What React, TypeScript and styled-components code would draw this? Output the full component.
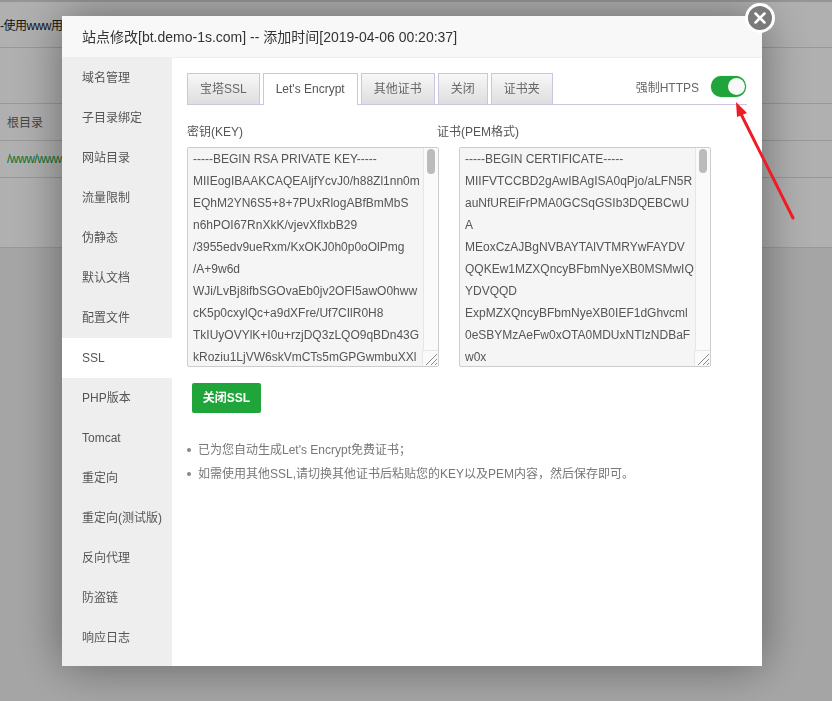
import React from 'react';
import styled, { createGlobalStyle } from 'styled-components';
import { X } from 'lucide-react';

const sideItems = [
  '域名管理',
  '子目录绑定',
  '网站目录',
  '流量限制',
  '伪静态',
  '默认文档',
  '配置文件',
  'SSL',
  'PHP版本',
  'Tomcat',
  '重定向',
  '重定向(测试版)',
  '反向代理',
  '防盗链',
  '响应日志',
];

const tabs = ['宝塔SSL', "Let's Encrypt", '其他证书', '关闭', '证书夹'];

const keyText = `-----BEGIN RSA PRIVATE KEY-----
MIIEogIBAAKCAQEAljfYcvJ0/h88Zl1nn0m
EQhM2YN6S5+8+7PUxRlogABfBmMbS
n6hPOI67RnXkK/vjevXflxbB29
/3955edv9ueRxm/KxOKJ0h0p0oOlPmg
/A+9w6d
WJi/LvBj8ifbSGOvaEb0jv2OFI5awO0hww
cK5p0cxylQc+a9dXFre/Uf7CIlR0H8
TkIUyOVYlK+I0u+rzjDQ3zLQO9qBDn43G
kRoziu1LjVW6skVmCTs5mGPGwmbuXXl`;

const certText = `-----BEGIN CERTIFICATE-----
MIIFVTCCBD2gAwIBAgISA0qPjo/aLFN5R
auNfUREiFrPMA0GCSqGSIb3DQEBCwU
A
MEoxCzAJBgNVBAYTAlVTMRYwFAYDV
QQKEw1MZXQncyBFbmNyeXB0MSMwIQ
YDVQQD
ExpMZXQncyBFbmNyeXB0IEF1dGhvcml
0eSBYMzAeFw0xOTA0MDUxNTIzNDBaF
w0x`;

const CodeField = ({ value, thumb }: { value: string; thumb: number }) => (
  <FieldBox>
    <CodeArea readOnly wrap="off" defaultValue={value} />
    <ScrollTrack>
      <ScrollThumb style={{ height: thumb }} />
    </ScrollTrack>
    <Grip>
      <svg width="15" height="15" viewBox="0 0 15 15">
        <path d="M3 14 L14 3 M8 14 L14 8 M12 14 L14 12" stroke="#8a8a8a" strokeWidth="1" fill="none" />
      </svg>
    </Grip>
  </FieldBox>
);

const App = () => {
  return (
    <>
      <GlobalStyle />
      <Page>
        <TopStrip />
        <NoticeRow>-使用www用</NoticeRow>
        <BlankRow />
        <HeadRow>根目录</HeadRow>
        <PathRow>/www/www</PathRow>
        <TallRow />
      </Page>
      <Shade />
      <Modal>
        <CloseButton>
          <X size={18} strokeWidth={3.4} color="#fff" />
        </CloseButton>
        <Header>站点修改[bt.demo-1s.com] -- 添加时间[2019-04-06 00:20:37]</Header>
        <Body>
          <Sidebar>
            {sideItems.map((item) => (
              <SideItem key={item} $active={item === 'SSL'}>
                {item}
              </SideItem>
            ))}
          </Sidebar>
          <Content>
            <TabBar>
              {tabs.map((tab) => (
                <Tab key={tab} $active={tab === "Let's Encrypt"}>
                  {tab}
                </Tab>
              ))}
              <ForceHttps>
                <ForceLabel>强制HTTPS</ForceLabel>
                <Toggle>
                  <Knob />
                </Toggle>
              </ForceHttps>
            </TabBar>
            <Labels>
              <FieldLabel>密钥(KEY)</FieldLabel>
              <FieldLabel>证书(PEM格式)</FieldLabel>
            </Labels>
            <Fields>
              <CodeField value={keyText} thumb={25} />
              <CodeField value={certText} thumb={24} />
            </Fields>
            <GreenButton>关闭SSL</GreenButton>
            <Notes>
              <Note>已为您自动生成Let's Encrypt免费证书；</Note>
              <Note>如需使用其他SSL,请切换其他证书后粘贴您的KEY以及PEM内容，然后保存即可。</Note>
            </Notes>
          </Content>
        </Body>
      </Modal>
      <Arrow width="70" height="125" viewBox="0 0 70 125">
        <path d="M62 122 L9 16" stroke="#ee1c25" strokeWidth="3" strokeLinecap="round" fill="none" />
        <path d="M5 6 L6 21 L16 17 Z" fill="#ee1c25" />
      </Arrow>
    </>
  );
};

export default App;

const GlobalStyle = createGlobalStyle`
  html, body {
    margin: 0;
    padding: 0;
    width: 832px;
    height: 701px;
    overflow: hidden;
    background: #fff;
    font-family: "Liberation Sans", "Noto Sans CJK SC", sans-serif;
    font-size: 12px;
    color: #555;
  }
`;

const Page = styled.div`
  display: flex;
  flex-direction: column;
  width: 832px;
  height: 701px;
  background: #f0f0f0;
`;

const TopStrip = styled.div`
  height: 2px;
  background: #d8d8d8;
`;

const NoticeRow = styled.div`
  display: flex;
  align-items: center;
  height: 46px;
  box-sizing: border-box;
  padding-bottom: 1px;
  letter-spacing: -0.5px;
  white-space: nowrap;
  color: #222;
  background: #fff;
  border-bottom: 1px solid #ddd;
`;

const BlankRow = styled.div`
  height: 56px;
  box-sizing: border-box;
  background: #fff;
  border-bottom: 1px solid #ddd;
`;

const HeadRow = styled.div`
  display: flex;
  align-items: center;
  height: 37px;
  box-sizing: border-box;
  padding: 0 0 2px 7px;
  color: #666;
  background: #fff;
  border-bottom: 1px solid #ddd;
`;

const PathRow = styled.div`
  display: flex;
  align-items: center;
  height: 37px;
  box-sizing: border-box;
  padding: 0 0 0 7px;
  letter-spacing: -0.5px;
  white-space: nowrap;
  color: #20a53a;
  background: #fff;
  border-bottom: 1px solid #ddd;
`;

const TallRow = styled.div`
  height: 70px;
  box-sizing: border-box;
  background: #fff;
  border-bottom: 1px solid #ddd;
`;

const Shade = styled.div`
  position: fixed;
  inset: 0;
  background: rgba(0, 0, 0, 0.31);
`;

const Modal = styled.div`
  position: fixed;
  left: 62px;
  top: 16px;
  width: 700px;
  height: 650px;
  display: flex;
  flex-direction: column;
  background: #fff;
  box-shadow: 0 0 45px rgba(0, 0, 0, 0.42);
`;

const CloseButton = styled.div`
  position: absolute;
  top: -13px;
  right: -13px;
  width: 24px;
  height: 24px;
  display: flex;
  align-items: center;
  justify-content: center;
  background: #7a7a7a;
  border: 3px solid #fff;
  border-radius: 50%;
`;

const Header = styled.div`
  height: 41px;
  flex: none;
  padding-left: 20px;
  line-height: 42px;
  font-size: 14px;
  color: #333;
  background: #f8f8f8;
  border-bottom: 1px solid #eee;
  white-space: nowrap;
`;

const Body = styled.div`
  flex: 1;
  display: flex;
  min-height: 0;
`;

const Sidebar = styled.div`
  width: 110px;
  flex: none;
  background: #eee;
`;

const SideItem = styled.div<{ $active?: boolean }>`
  height: 40px;
  padding-left: 20px;
  line-height: 40px;
  font-size: 12px;
  color: #555;
  white-space: nowrap;
  background: ${(props) => (props.$active ? '#fff' : 'transparent')};
`;

const Content = styled.div`
  flex: 1;
  display: flex;
  flex-direction: column;
  padding: 15px 15px 0;
`;

const TabBar = styled.div`
  display: flex;
  align-items: flex-start;
  gap: 3px;
  height: 31px;
  flex: none;
  border-bottom: 1px solid #c9c6dd;
`;

const Tab = styled.div<{ $active?: boolean }>`
  height: ${(props) => (props.$active ? '31px' : '30px')};
  padding: 0 12px;
  line-height: 31px;
  font-size: 12px;
  white-space: nowrap;
  color: ${(props) => (props.$active ? '#555' : '#666')};
  background: ${(props) =>
    props.$active ? '#fff' : 'linear-gradient(#f7f7f7, #dedede)'};
  border: 1px solid #c9c6dd;
  border-bottom: 0;
`;

const ForceHttps = styled.div`
  margin-left: auto;
  margin-right: 1px;
  display: flex;
  align-items: center;
  gap: 12px;
  height: 23px;
  padding-top: 2px;
`;

const ForceLabel = styled.span`
  font-size: 12px;
  color: #666;
`;

const Toggle = styled.div`
  width: 35px;
  height: 21px;
  display: flex;
  align-items: center;
  justify-content: flex-end;
  padding-right: 1px;
  box-sizing: border-box;
  background: #20a53a;
  border-radius: 11px;
  box-shadow: 0 0 1px #20a53a;
`;

const Knob = styled.div`
  width: 17px;
  height: 17px;
  background: #f8f8f8;
  border-radius: 50%;
`;

const Labels = styled.div`
  display: grid;
  grid-template-columns: 250px 250px;
  height: 20px;
  margin-top: 17px;
  line-height: 20px;
  font-size: 12px;
  color: #555;
`;

const FieldLabel = styled.div`
  white-space: nowrap;
`;

const Fields = styled.div`
  display: flex;
  gap: 20px;
  margin-top: 5px;
`;

const FieldBox = styled.div`
  position: relative;
  width: 252px;
  height: 220px;
`;

const CodeArea = styled.textarea`
  display: block;
  width: 100%;
  height: 100%;
  box-sizing: border-box;
  margin: 0;
  padding: 0 16px 0 5px;
  font-family: "Liberation Sans", "Noto Sans CJK SC", sans-serif;
  font-size: 12px;
  line-height: 22px;
  color: #555;
  background: #f5f5f5;
  border: 1px solid #ccc;
  border-radius: 2px;
  outline: none;
  overflow: hidden;
  resize: none;
  white-space: pre;
`;

const ScrollTrack = styled.div`
  position: absolute;
  top: 1px;
  right: 1px;
  bottom: 1px;
  width: 15px;
  box-sizing: border-box;
  padding: 1px 3px 0 3px;
  background: #fafafa;
  border-left: 1px solid #e6e6e6;
`;

const ScrollThumb = styled.div`
  width: 8px;
  background: #bbb;
  border-radius: 4px;
`;

const Grip = styled.div`
  position: absolute;
  right: 1px;
  bottom: 1px;
  width: 15px;
  height: 15px;
  background: #fafafa;
  border-left: 1px solid #e6e6e6;
  border-top: 1px solid #e6e6e6;

  svg {
    display: block;
  }
`;

const GreenButton = styled.div`
  width: 69px;
  height: 30px;
  margin: 16px 0 0 5px;
  line-height: 30px;
  text-align: center;
  font-size: 12px;
  font-weight: bold;
  color: #fff;
  background: #20a53a;
  border-radius: 2px;
`;

const Notes = styled.ul`
  margin: 25px 0 0;
  padding: 0;
  list-style: none;
  font-size: 12px;
  line-height: 24px;
  color: #777;
`;

const Note = styled.li`
  display: flex;
  align-items: center;
  gap: 7px;

  &::before {
    content: '';
    width: 4px;
    height: 4px;
    flex: none;
    margin-left: 0;
    background: #888;
    border-radius: 50%;
  }
`;

const Arrow = styled.svg`
  position: fixed;
  left: 731px;
  top: 96px;
`;
